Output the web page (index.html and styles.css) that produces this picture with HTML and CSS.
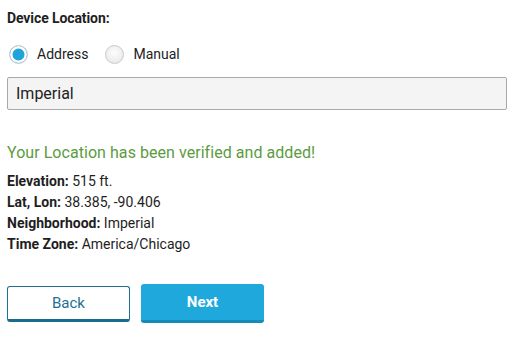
FILE: index.html
```html
<!DOCTYPE html>
<html>
<head>
<meta charset="utf-8">
<link rel="stylesheet" href="styles.css">
</head>
<body>
<div class="page">
  <div class="label">Device Location:</div>
  <div class="radios">
    <label class="radio"><span class="dot checked"></span>Address</label>
    <label class="radio"><span class="dot"></span>Manual</label>
  </div>
  <div class="input">Imperial</div>
  <div class="success">Your Location has been verified and added!</div>
  <div class="details">
    <div><b>Elevation:</b> 515 ft.</div>
    <div><b>Lat, Lon:</b> 38.385, -90.406</div>
    <div><b>Neighborhood:</b> Imperial</div>
    <div><b>Time Zone:</b> America/Chicago</div>
  </div>
  <div class="buttons">
    <button class="btn back">Back</button>
    <button class="btn next">Next</button>
  </div>
</div>
</body>
</html>
```
FILE: styles.css
```css
html, body { margin: 0; padding: 0; background: #fff; }
body { font-family: Roboto, "Liberation Sans", sans-serif; color: #1e1e1e; }
.page { padding: 10px 25px 0 7px; }
.label { font-size: 14px; font-weight: 700; line-height: 16px; letter-spacing: -0.1px; }
.radios { display: flex; gap: 17px; margin-top: 18px; height: 20px; align-items: center; }
.radio { display: flex; align-items: center; font-size: 14px; gap: 9px; color: #222; }
.dot { width: 19px; height: 19px; border-radius: 50%; border: 1px solid #cacaca; box-sizing: border-box; background: radial-gradient(circle at 50% 40%, #fdfdfd, #e4e4e4); margin-left: 2px; }
.dot.checked { background: #1ea3db; box-shadow: inset 0 0 0 2.5px #fff; border-color: #cfcfcf; }
.radio + .radio .dot { margin-left: 0; }
.input { margin-top: 13px; height: 33px; box-sizing: border-box; border: 1px solid #a9a9a9; border-radius: 2px; background: #f4f4f4; font-size: 16px; padding: 0 8px; display: flex; align-items: center; color: #222; }
.success { margin-top: 33px; font-size: 16px; color: #5b9c3f; line-height: 20px; letter-spacing: 0.05px; }
.details { margin-top: 8px; font-size: 14px; line-height: 21px; }
.details b { font-weight: 700; }
.buttons { display: flex; gap: 11px; margin-top: 29px; align-items: center; }
.btn { width: 123px; font-family: inherit; font-size: 15px; border-radius: 3px; cursor: pointer; }
.back { height: 36px; background: #fff; color: #1d6f94; border: 1px solid #1d6f94; border-bottom: 3px solid #1a6b8f; }
.next { height: 39px; background: #1ea8dc; color: #fff; font-weight: 700; border: none; border-bottom: 3px solid #168bbb; }
```
